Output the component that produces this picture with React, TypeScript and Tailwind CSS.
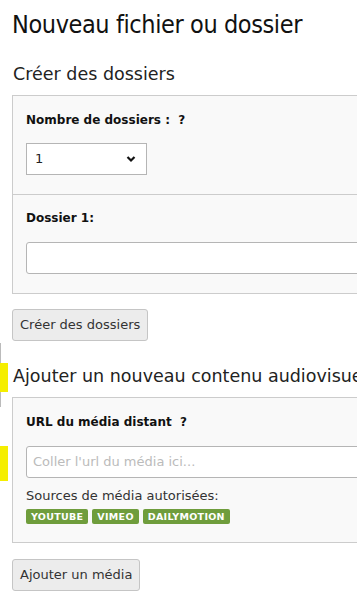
const body = { fontFamily: '"DejaVu Sans", Verdana, sans-serif' }

function Badge({ label }: { label: string }) {
  return (
    <span className="inline-block h-[15px] rounded-[2px] bg-[#6f9d3c] px-[5px] text-[9.5px] font-bold leading-[15px] tracking-[0.3px] text-white">
      {label}
    </span>
  )
}

function Select() {
  return (
    <div className="flex h-[32px] w-[121px] items-center justify-between border border-[#b5b5b5] bg-white pl-[8px] pr-[10px] text-[13px] text-[#222]">
      <span>1</span>
      <svg width="10" height="8" viewBox="0 0 10 8">
        <path d="M1.5 2 L5 5.5 L8.5 2" fill="none" stroke="#111" strokeWidth="2.2" />
      </svg>
    </div>
  )
}

export default function App() {
  return (
    <div className="relative h-[604px] w-[357px] overflow-hidden bg-white" style={body}>
      {/* yellow markers on the left edge */}
      <div className="absolute left-0 top-[343px] h-[64px] w-px bg-[#bbb]" />
      <div className="absolute left-0 top-[363px] h-[29px] w-[8px] bg-[#f5ee00]" />
      <div className="absolute left-0 top-[446px] h-[35px] w-[8px] bg-[#f5ee00]" />

      <div className="w-[440px] pl-[12px]">
        <h1
          className="pt-[9px] text-[25px] leading-[32px] text-[#111]"
          style={{ fontFamily: '"DejaVu Sans Condensed", "Liberation Sans Narrow", sans-serif', letterSpacing: '-0.4px' }}
        >
          Nouveau fichier ou dossier
        </h1>

        <h2 className="mt-[21px] pl-px text-[17.5px] leading-[24px] text-[#222]">Créer des dossiers</h2>

        <div className="mt-[9px] border border-[#ccc] bg-[#f9f9f9]">
          <div className="px-[13px] pb-[19px] pt-[14px]">
            <div className="text-[12px] font-bold leading-[20px] text-[#111]">
              Nombre de dossiers :&nbsp; ?
            </div>
            <div className="mt-[13px]">
              <Select />
            </div>
          </div>
          <div className="border-t border-[#ccc] px-[13px] pb-[19px] pt-[13px]">
            <div className="text-[12px] font-bold leading-[20px] text-[#111]">Dossier 1:</div>
            <div className="mt-[14px] h-[32px] w-full rounded-[3px] border border-[#b5b5b5] bg-white" />
          </div>
        </div>

        <button className="mt-[15px] h-[32px] rounded-[3px] border border-[#c5c5c5] bg-[#ececec] px-[7px] text-[13px] text-[#333]">
          Créer des dossiers
        </button>

        <h2 className="mt-[23px] pl-px text-[17.5px] leading-[24px] text-[#222]">
          Ajouter un nouveau contenu audiovisuel
        </h2>

        <div className="mt-[9px] border border-[#ccc] bg-[#f9f9f9] px-[13px] pb-[18px] pt-[14px]">
          <div className="text-[12px] font-bold leading-[20px] text-[#111]">URL du média distant&nbsp; ?</div>
          <div className="mt-[14px] flex h-[32px] w-full items-center rounded-[3px] border border-[#b5b5b5] bg-white px-[6px] text-[13px] text-[#bbb]">
            Coller l'url du média ici...
          </div>
          <div className="mt-[8px] text-[13px] leading-[20px] text-[#333]">Sources de média autorisées:</div>
          <div className="mt-[3px] flex gap-[4px]">
            <Badge label="YOUTUBE" />
            <Badge label="VIMEO" />
            <Badge label="DAILYMOTION" />
          </div>
        </div>

        <button className="mt-[16px] h-[32px] rounded-[3px] border border-[#c5c5c5] bg-[#ececec] px-[7px] text-[13px] text-[#333]">
          Ajouter un média
        </button>
      </div>
    </div>
  )
}
